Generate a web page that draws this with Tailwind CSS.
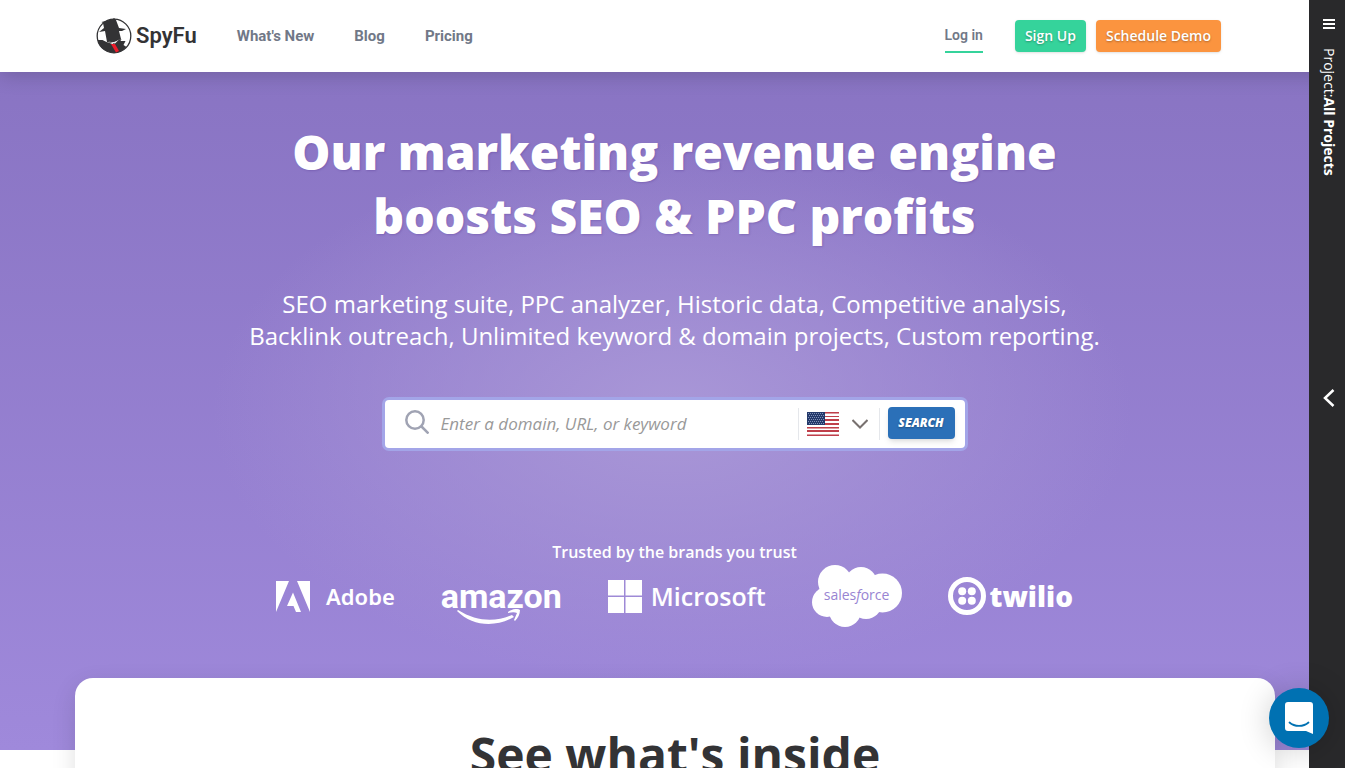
<!DOCTYPE html>
<html lang="en">
<head>
<meta charset="utf-8">
<meta name="viewport" content="width=device-width, initial-scale=1">
<title>SpyFu</title>
<script src="https://cdn.jsdelivr.net/npm/@tailwindcss/browser@4"></script>
</head>
<body class="h-screen overflow-hidden bg-white font-['Open_Sans',sans-serif] text-white">
<header class="relative z-10 flex h-[72px] items-center bg-white pl-24 pr-[124px] shadow-[0_2px_20px_rgba(0,0,0,0.2)]">
  <a href="#" class="flex items-center gap-1 text-[#333335]" aria-label="SpyFu home">
    <svg class="h-9 w-9" viewBox="0 0 36 36" aria-hidden="true">
      <circle cx="18" cy="18" r="16.800" fill="#fff" stroke="#333335" stroke-width="1.300"/>
      <path d="M5.500 4 17 1l1-1 2 2 3 8 7 1-4 2-3 0 2 8-4 2-6 2-4-1-2-11-6 1 5-4-1-5z" fill="#333335"/>
      <path d="M1.500 22l5 0 4 2 6 2 5-4 4-1-1 2 5 0-2 4 3 2A16.800 16.800 0 0 1 1.500 22z" fill="#333335"/>
      <path d="M12 23.500l6 1 5-3-4 4z" fill="#fff"/>
      <path d="M15 26h4l4 7-3 1.500z" fill="#ed1c2b"/>
    </svg>
    <span class="font-[Roboto,sans-serif] text-[22px] leading-8 font-semibold">SpyFu</span>
  </a>
  <nav class="ml-10 flex gap-10 font-[Roboto,sans-serif] text-[15px] leading-6 font-bold text-[#717887]">
    <a href="#">What's New</a><a href="#">Blog</a><a href="#">Pricing</a>
  </nav>
  <div class="ml-auto flex items-center">
    <a href="#" class="mr-8 border-b-2 border-[#35d39b] pt-1 pb-1 font-[Roboto,sans-serif] text-[14px] leading-6 font-semibold text-[#717887]">Log in</a>
    <button class="mr-[10px] h-8 rounded bg-[#35d39b] px-[10px] pb-px text-[14px] font-semibold shadow-sm [text-shadow:0_1px_2px_rgba(0,0,0,0.3)]">Sign Up</button>
    <button class="h-8 rounded bg-[#fb943f] px-[10px] pb-px text-[14px] font-semibold shadow-sm [text-shadow:0_1px_2px_rgba(0,0,0,0.3)]">Schedule Demo</button>
  </div>
</header>

<main>
  <section class="flex h-[678px] flex-col items-center bg-[radial-gradient(ellipse_460px_270px_at_50%_340px,#a997d7,#a997d700),linear-gradient(#8974c3,#9f89db)] pt-12 pl-1 text-center">
    <h1 class="text-[48px] leading-[64px] font-extrabold [text-shadow:1px_1px_2px_rgba(80,50,140,0.3)]">Our marketing revenue engine<br>boosts SEO &amp; PPC profits</h1>
    <p class="mt-10 text-[24px] leading-8">SEO marketing suite, PPC analyzer, Historic data, Competitive analysis,<br>Backlink outreach, Unlimited keyword &amp; domain projects, Custom reporting.</p>

    <form class="mt-12 flex h-12 w-full max-w-[580px] items-center rounded bg-white pr-[10px] pl-5 shadow-[0_0_0_3px_#a3a5e8]">
      <svg class="mb-1 h-6 w-6 shrink-0" viewBox="0 0 24 24" fill="none" stroke="#a0a3b3" stroke-width="2.500" aria-hidden="true"><circle cx="10" cy="10" r="8.700"/><path d="M16 16l7.500 7.500"/></svg>
      <input type="text" aria-label="Domain, URL, or keyword" placeholder="Enter a domain, URL, or keyword" class="ml-3 min-w-0 flex-1 text-[17px] leading-6 text-gray-800 italic outline-none placeholder:text-[#999]">
      <button type="button" aria-label="Choose country" class="mr-2 flex h-8 w-[82px] items-center justify-between border-x border-gray-200 pr-[11px] pl-2">
        <svg class="h-6 w-8" viewBox="0 0 32 24" shape-rendering="crispEdges" aria-hidden="true">
          <path fill="#fff" d="M0 0h32v24H0z"/>
          <path fill="#bf3f4a" d="M0 0h32v1H0zM0 4h32v1H0zM0 7h32v2H0zM0 11h32v2H0zM0 15h32v1H0zM0 18h32v2H0zM0 23h32v1H0z"/>
          <path fill="#dd9aa0" d="M0 1h32v1H0zM0 16h32v1H0zM0 22h32v1H0z"/>
          <path fill="#243a6b" d="M0 0h18v13H0z"/>
          <path stroke="#8090b8" stroke-dasharray="1 1" d="M1 1.500h16M2 3.500h15M1 5.500h16M2 7.500h15M1 9.500h16M2 11.500h15"/>
        </svg>
        <svg class="h-[10px] w-4" viewBox="0 0 16 10" fill="none" stroke="#78716f" stroke-width="2" aria-hidden="true"><path d="M.5 1 8 8.500 15.500 1"/></svg>
      </button>
      <button type="submit" class="mb-0.5 h-8 w-[67px] rounded bg-[#2b70b8] text-[12px] font-extrabold italic shadow-md [text-shadow:0_1px_2px_rgba(0,0,0,0.3)]">SEARCH</button>
    </form>

    <p class="mt-[92px] text-[16px] leading-6 font-semibold">Trusted by the brands you trust</p>
    <div class="flex h-16 w-full max-w-[797px] items-center justify-between">
      <div class="flex items-center gap-4">
        <svg class="h-[31px] w-[34px]" viewBox="0 0 34 31" fill="#fff" aria-hidden="true"><path d="M0 0h13L0 31zM21 0h13v31zM17 11.500 25 31h-5l-2.500-6H11z"/></svg>
        <span class="font-['Noto_Sans',sans-serif] text-[22px] leading-8 font-semibold">Adobe</span>
      </div>
      <div class="relative">
        <span class="block font-[Roboto,sans-serif] text-[34px] leading-[60px] font-bold">amazon</span>
        <svg class="absolute top-[43px] left-4 h-4 w-[66px]" viewBox="0 0 66 16" fill="#fff" aria-hidden="true"><path d="M1 1C20 13 39 13 55 6l2 2C38 19 15 17 0 2zM51 3c4-3 9-4 12-2 0 4-2 8-5 11l-1-1 3-7c-2-1-5-1-9 0z"/></svg>
      </div>
      <div class="flex items-center gap-[9px]">
        <svg class="h-[33px] w-[34px]" viewBox="0 0 34 33" fill="#fff" aria-hidden="true"><path d="M0 0h16v15.500H0zM17.500 0H34v15.500H17.500zM0 17h16v16H0zM17.500 17H34v16H17.500z"/></svg>
        <span class="text-[25px] leading-8 font-semibold">Microsoft</span>
      </div>
      <div class="relative flex h-[62px] w-[90px] items-center justify-center">
        <svg class="absolute inset-0 h-full w-full" viewBox="0 0 90 62" fill="#fff" aria-hidden="true"><circle cx="23" cy="17" r="17"/><circle cx="49" cy="18" r="16"/><circle cx="70.500" cy="28" r="19.500"/><circle cx="15" cy="37" r="15"/><circle cx="33" cy="46" r="16"/><circle cx="54" cy="38" r="16"/><path d="M20 18h50v24H20z"/></svg>
        <span class="relative pb-1 text-[14px] font-medium text-[#9884d2]">sales<i>f</i>orce</span>
      </div>
      <div class="flex items-center gap-1">
        <svg class="h-[38px] w-[38px]" viewBox="0 0 38 38" fill="#fff" aria-hidden="true"><circle cx="19" cy="19" r="16.500" fill="none" stroke="#fff" stroke-width="5"/><circle cx="14.200" cy="14.200" r="4"/><circle cx="23.800" cy="14.200" r="4"/><circle cx="14.200" cy="23.800" r="4"/><circle cx="23.800" cy="23.800" r="4"/></svg>
        <span class="text-[28px] leading-8 font-extrabold">twilio</span>
      </div>
    </div>
  </section>

  <section class="relative -mt-[72px] pl-[5px]">
    <div class="mx-auto max-w-[1200px] rounded-t-[18px] bg-white pt-[45px] pb-16 text-center shadow-[0_8px_24px_rgba(0,0,0,0.12)]">
      <h2 class="text-[48px] leading-[64px] font-bold text-[#333335]">See what's inside</h2>
    </div>
  </section>
</main>

<aside class="fixed inset-y-0 right-0 z-20 w-9 bg-[#29292b]">
  <div class="flex flex-col items-center pt-[18px] pl-1">
    <button aria-label="Menu" class="flex"><svg class="h-3 w-3" viewBox="0 0 12 12" stroke="#fff" stroke-width="2" aria-hidden="true"><path d="M0 2h12M0 6h12M0 10h12"/></svg></button>
    <p class="mt-[18px] text-[14px] leading-5 [writing-mode:vertical-rl]">Project:<b>All Projects</b></p>
  </div>
  <button aria-label="Expand projects panel" class="absolute top-[388px] left-[14px]"><svg class="h-5 w-3" viewBox="0 0 12 20" fill="none" stroke="#fff" stroke-width="2.500" aria-hidden="true"><path d="M10.500 2 2 10l8.500 8"/></svg></button>
</aside>

<button aria-label="Open chat" class="fixed right-4 bottom-5 z-30 flex h-[60px] w-[60px] items-center justify-center rounded-full bg-[#0071b2] shadow-[0_2px_32px_rgba(0,0,0,0.2)]">
  <svg class="h-8 w-7" viewBox="0 0 28 32" aria-hidden="true"><path d="M3 0h22a3 3 0 0 1 3 3v29l-7-3H3a3 3 0 0 1-3-3V3a3 3 0 0 1 3-3z" fill="#fff"/><path d="M4.500 20.500c5 4.500 14 4.500 19 0" fill="none" stroke="#0071b2" stroke-width="1.800" stroke-linecap="round"/></svg>
</button>
</body>
</html>
